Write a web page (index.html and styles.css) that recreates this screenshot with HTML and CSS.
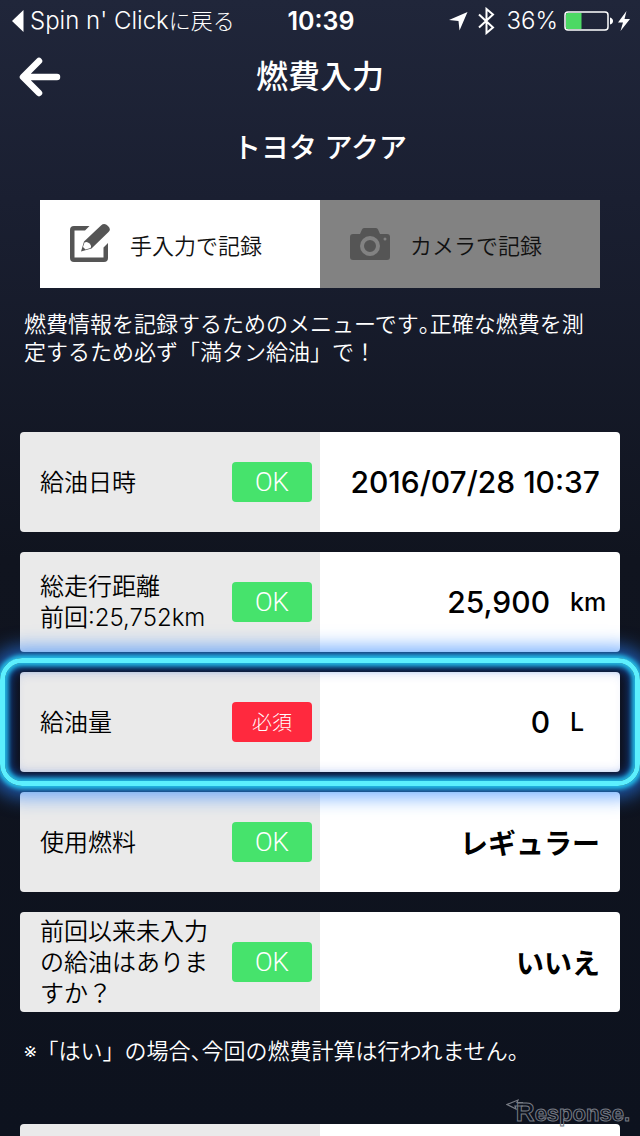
FILE: index.html
```html
<!DOCTYPE html>
<html lang="ja">
<head>
<meta charset="utf-8">
<meta name="viewport" content="width=device-width, initial-scale=1">
<title>燃費入力</title>
<link rel="stylesheet" href="styles.css">
</head>
<body>
<div class="screen">
  <div class="status">
    <a class="status-back" href="#">
      <svg width="12" height="22" viewBox="0 0 12 22" aria-hidden="true"><path d="M11.500 0V22L0 11Z" fill="#fff"/></svg>
      <span>Spin n' Click<span class="status-ja">に戻る</span></span>
    </a>
    <span class="status-time">10:39</span>
    <div class="status-right">
      <svg class="loc" width="19" height="19" viewBox="0 0 19 19" aria-hidden="true"><path d="M18.500 0L10.500 18.500L9.500 9L0 8Z" fill="#fff"/></svg>
      <svg class="bt" width="17" height="28" viewBox="0 0 17 28" aria-hidden="true"><path d="M1 7.500L15 20.500L8.500 26V2L15 7.500L1 20.500" fill="none" stroke="#fff" stroke-width="2"/></svg>
      <span class="percent">36%</span>
      <svg class="battery" width="50" height="20" viewBox="0 0 50 20" aria-hidden="true"><rect x="1" y="1" width="43" height="18" rx="3" fill="none" stroke="#fff" stroke-width="1.500"/><path d="M2 3.500Q2 2 3.500 2H17.500V18H3.500Q2 18 2 16.500Z" fill="#4cd964"/><path d="M46 6.500Q49 7.500 49 10T46 13.500Z" fill="#fff"/></svg>
      <svg class="bolt" width="12" height="20" viewBox="0 0 12 20" aria-hidden="true"><path d="M8.500 0L0 11.500H5L2.500 20L12 8H6.500Z" fill="#fff"/></svg>
    </div>
  </div>

  <header class="header">
    <button class="back" type="button" aria-label="戻る">
      <svg width="42" height="40" viewBox="0 0 42 40" aria-hidden="true"><path d="M20 4L4 20L20 36M5 20H38" fill="none" stroke="#fff" stroke-width="6.500" stroke-linecap="round" stroke-linejoin="round"/></svg>
    </button>
    <h1 class="title">燃費入力</h1>
  </header>
  <h2 class="car">トヨタ アクア</h2>

  <div class="tabs">
    <button class="tab" type="button">
      <svg width="40" height="40" viewBox="0 0 40 40" aria-hidden="true"><path d="M19.500 2H4Q0 2 0 6V34Q0 38 4 38H34Q38 38 38 34V19L33.500 23.500V33.500H4.500V6.500H15Z" fill="#555"/><path d="M11 27.500L14 17.500L31 1.500Q34.500-1.500 38 2T38.500 8L21.500 24.500Z" fill="#555"/><path d="M14.500 18.500Q17 17 19.500 19.500T20.500 24L15.500 25.500L13 23Z" fill="#fff"/></svg>
      <span>手入力で記録</span>
    </button>
    <button class="tab tab-off" type="button">
      <svg width="40" height="40" viewBox="0 0 40 40" aria-hidden="true"><path d="M3 10H10L12 5.500Q12.500 4 14 4H26Q27.500 4 28 5.500L30 10H37Q40 10 40 13V33Q40 36 37 36H3Q0 36 0 33V13Q0 10 3 10Z" fill="#555"/><circle cx="20" cy="22" r="8" fill="none" stroke="#828282" stroke-width="4"/><circle cx="35" cy="15" r="1.500" fill="#828282"/></svg>
      <span>カメラで記録</span>
    </button>
  </div>

  <p class="lead">燃費情報を記録するためのメニューです<span class="half">。</span>正確な燃費を測定するため必ず「満タン給油」で！</p>

  <form class="form">
    <div class="row">
      <div class="name"><label for="date">給油日時</label><span class="badge">OK</span></div>
      <div class="value"><input class="field field-number" id="date" type="text" value="2016/07/28 10:37"></div>
    </div>
    <div class="row">
      <div class="name"><label for="distance">総走行距離<br>前回:25,752km</label><span class="badge">OK</span></div>
      <div class="value"><input class="field field-number" id="distance" type="text" value="25,900"><span class="unit">km</span></div>
    </div>
    <div class="row row-active">
      <div class="name"><label for="fuel">給油量</label><span class="badge badge-required">必須</span></div>
      <div class="value"><input class="field field-number" id="fuel" type="text" value="0"><span class="unit">L</span></div>
    </div>
    <div class="row">
      <div class="name"><label for="kind">使用燃料</label><span class="badge">OK</span></div>
      <div class="value"><select class="field field-select" id="kind"><option>レギュラー</option></select></div>
    </div>
    <div class="row">
      <div class="name"><label for="missed">前回以来未入力の給油はありますか？</label><span class="badge">OK</span></div>
      <div class="value"><select class="field field-select" id="missed"><option>いいえ</option></select></div>
    </div>
    <p class="note">※「はい」の場合<span class="half">、</span>今回の燃費計算は行われません。</p>
    <div class="row"><div class="name"></div><div class="value"></div></div>
  </form>

  <div class="brand">
    <svg class="brand-arrow" width="18" height="14" viewBox="0 0 18 14" aria-hidden="true"><path d="M17 4.500H11L12 2L1 6.500L10 11L9 8H17" fill="none" stroke="#777b84" stroke-width="1.200"/></svg>
    <span><span class="brand-initial">R</span>esponse.</span>
  </div>
</div>
</body>
</html>
```
FILE: styles.css
```css
* { box-sizing: border-box; }

body {
  margin: 0;
  background: #0d121e;
  color: #fff;
  font-family: Inter, "Noto Sans CJK JP", sans-serif;
}

button, input, select {
  margin: 0;
  padding: 0;
  border: 0;
  background: none;
  color: inherit;
  font: inherit;
  appearance: none;
}

svg { flex: none; display: block; }

.screen {
  position: relative;
  height: 100vh;
  overflow: hidden;
  background: linear-gradient(#20263a, #1a1f31 200px, #10141f 560px, #0d121e);
}

.status {
  display: grid;
  grid-template-columns: 1fr auto 1fr;
  align-items: center;
  height: 42px;
  padding: 0 10px 0 12px;
  font-size: 24px;
  line-height: 32px;
}

.status-back {
  display: flex;
  align-items: center;
  gap: 6px;
  color: #fff;
  font-weight: 350;
  text-decoration: none;
  white-space: nowrap;
}

.status-ja {
  font-size: 22px;
  font-weight: 300;
}

.status-time {
  font-size: 25px;
  font-weight: 600;
}

.status-right {
  display: flex;
  align-items: center;
  justify-content: flex-end;
}

.bt { margin: 0 12px 0 10px; }
.percent { font-weight: 350; }
.battery { margin: 0 4px 0 6px; }

.header {
  display: grid;
  grid-template-columns: 42px 1fr 42px;
  align-items: center;
  height: 70px;
  padding: 0 19px;
}

.title {
  margin: 0;
  font-size: 32px;
  font-weight: 500;
  line-height: 40px;
  text-align: center;
}

.car {
  margin: 16px 0 32px;
  font-size: 28px;
  font-weight: 500;
  line-height: 40px;
  text-align: center;
}

.tabs {
  display: grid;
  grid-template-columns: 1fr 1fr;
  margin: 0 40px;
}

.tab {
  display: flex;
  align-items: center;
  gap: 20px;
  height: 88px;
  padding: 0 30px;
  background: #fff;
  color: #111;
  font-size: 22px;
  font-weight: 350;
}

.tab-off { background: #828282; }

.lead {
  margin: 22px 40px 66px 24px;
  font-size: 22px;
  font-weight: 350;
  line-height: 28px;
}

.half { font-feature-settings: "halt"; }

.form {
  display: grid;
  gap: 20px;
  padding: 0 20px;
}

.row {
  position: relative;
  display: grid;
  grid-template-columns: 1fr 1fr;
  height: 100px;
  border-radius: 4px;
  background: linear-gradient(90deg, #eaeaea 50%, #fff 50%);
  color: #000;
}

.row-active { z-index: 1; }

.row-active::after {
  content: "";
  position: absolute;
  inset: -14px -20px;
  border: 5px solid #5ceffd;
  border-radius: 22px;
  box-shadow:
    0 0 4px 3px rgba(35, 195, 235, .95),
    0 0 18px 12px rgba(40, 130, 255, .6),
    inset 0 0 4px 3px rgba(35, 190, 230, .95),
    inset 0 0 8px 4px rgba(15, 100, 190, .7),
    inset 0 0 14px 6px rgba(20, 70, 220, .3);
  pointer-events: none;
}

.name {
  display: flex;
  align-items: center;
  justify-content: space-between;
  gap: 12px;
  padding: 0 8px 0 20px;
  font-size: 24px;
  font-weight: 350;
  line-height: 31px;
}

.badge {
  flex: none;
  width: 80px;
  border-radius: 4px;
  background: #46e36c;
  color: #fff;
  font-family: Roboto, sans-serif;
  font-size: 26px;
  font-weight: 300;
  line-height: 40px;
  text-align: center;
}

.badge-required {
  background: #ff293e;
  font-family: "Noto Sans CJK JP", sans-serif;
  font-size: 20px;
}

.value {
  display: flex;
  align-items: center;
}

.field {
  flex: 1;
  width: 100%;
  min-width: 0;
  height: 100%;
  padding-right: 20px;
  text-align: right;
  text-align-last: right;
}

.field-number {
  font-size: 30px;
  font-weight: 500;
}

.field-select {
  padding-top: 4px;
  font-size: 28px;
  font-weight: 600;
}

.unit {
  width: 50px;
  font-size: 25px;
  font-weight: 500;
}

.note {
  margin: 4px 4px 38px;
  font-size: 22px;
  font-weight: 350;
  line-height: 30px;
}

.brand {
  position: absolute;
  right: 10px;
  bottom: 8px;
  display: flex;
  align-items: flex-start;
  color: transparent;
  font-family: "Liberation Sans", sans-serif;
  font-size: 22px;
  font-weight: 700;
  line-height: 28px;
  -webkit-text-stroke: 1px #777b84;
}

.brand-arrow { margin-right: -8px; }

.brand-initial { font-size: 26px; }
```
